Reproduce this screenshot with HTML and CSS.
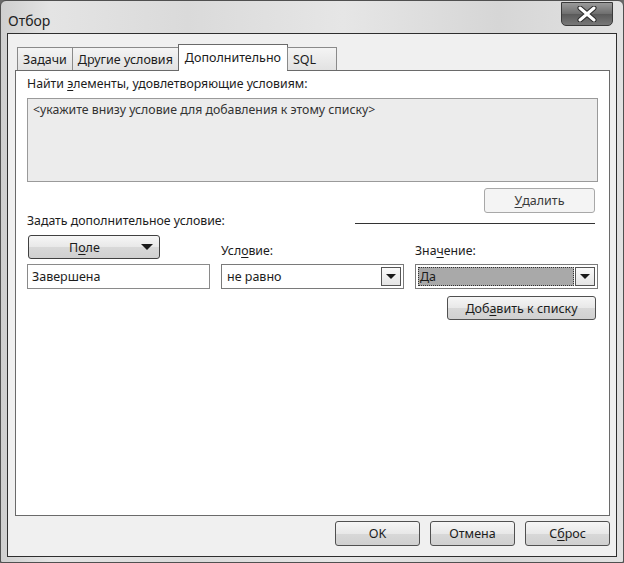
FILE: index.html
```html
<!DOCTYPE html>
<html lang="ru">
<head>
<meta charset="utf-8">
<title>Отбор</title>
<link rel="stylesheet" href="styles.css">
</head>
<body>
<div class="window">
  <div class="titlebar">
    <span class="title">Отбор</span>
    <div class="close">
      <svg width="22" height="16" viewBox="0 0 22 16"><path d="M4 2 L18 14 M18 2 L4 14" stroke="#2a2a2a" stroke-width="5" stroke-linecap="round"/><path d="M4 2 L18 14 M18 2 L4 14" stroke="#fff" stroke-width="3" stroke-linecap="round"/></svg>
    </div>
  </div>
  <div class="client">
    <div class="tabs">
      <div class="tab">Задачи</div>
      <div class="tab">Другие условия</div>
      <div class="tab active">Дополнительно</div>
      <div class="tab tab-sql">SQL</div>
    </div>
    <div class="panel">
      <div class="label">Найти <u>э</u>лементы, удовлетворяющие условиям:</div>
      <div class="listbox">&lt;укажите внизу условие для добавления к этому списку&gt;</div>
      <div class="row-right">
        <div class="btn btn-del"><u>У</u>далить</div>
      </div>
      <div class="section">
        <span class="label">Задать дополнительное условие:</span>
        <span class="rule"></span>
      </div>
      <div class="grid">
        <div class="btn btn-field"><span>П<u>о</u>ле</span><span class="tri"></span></div>
        <div class="label lbl-col">Усл<u>о</u>вие:</div>
        <div class="label lbl-col">Зна<u>ч</u>ение:</div>
        <div class="input">Завершена</div>
        <div class="combo"><span class="val">не равно</span><span class="arrow"><span class="tri"></span></span></div>
        <div class="combo sel"><span class="val"><span class="focus">Да</span></span><span class="arrow"><span class="tri"></span></span></div>
        <div></div>
        <div></div>
        <div class="add-cell"><div class="btn btn-add">Доб<u>а</u>вить к списку</div></div>
      </div>
    </div>
    <div class="footer">
      <div class="btn btn-foot">OK</div>
      <div class="btn btn-foot">Отмена</div>
      <div class="btn btn-foot">С<u>б</u>рос</div>
    </div>
  </div>
</div>
</body>
</html>
```

FILE: styles.css
```css
* { box-sizing: border-box; }
html, body { margin: 0; padding: 0; }
body {
  width: 624px;
  height: 563px;
  background: #6a6a6a;
  font-family: "Noto Sans", "Open Sans", sans-serif;
  font-size: 12px;
  color: #1c1c1c;
  overflow: hidden;
}
.window {
  width: 624px;
  height: 563px;
  border: 1px solid #505050;
  border-radius: 6px 6px 2px 2px;
  background: linear-gradient(90deg, #cfcfcf 0%, #e4e4e4 8%, #dadada 30%, #e6e6e6 55%, #d6d6d6 80%, #e2e2e2 100%);
  display: flex;
  flex-direction: column;
}
.titlebar {
  height: 32px;
  display: flex;
  align-items: flex-start;
  justify-content: space-between;
  padding: 0 10px 0 7px;
}
.title {
  font-size: 14px;
  color: #222;
  margin-top: 10px;
}
.close {
  width: 52px;
  height: 24px;
  margin-top: 1px;
  border: 1px solid #3a3a3a;
  border-radius: 0 0 5px 5px;
  background: linear-gradient(#9a9a9a, #6e6e6e 50%, #5a5a5a 51%, #787878);
  display: flex;
  align-items: center;
  justify-content: center;
}
.client {
  flex: 1;
  margin: 0 6px 5px 6px;
  border: 1px solid #2e2e2e;
  background: #f0f0f0;
  display: flex;
  flex-direction: column;
  padding: 10px 6px 0 7px;
}
.tabs {
  display: flex;
  align-items: flex-end;
  height: 26px;
  padding-left: 2px;
  position: relative;
  z-index: 1;
}
.tab {
  height: 23px;
  border: 1px solid #8a8a8a;
  border-bottom: none;
  margin-right: -1px;
  padding: 3px 5px 0 5px;
  background: linear-gradient(#f4f4f4, #e2e2e2);
  font-size: 12.5px;
  white-space: nowrap;
}
.tab-sql { width: 50px; }
.tab.active {
  height: 27px;
  background: #fff;
  padding: 4px 6px 0 6px;
  margin-bottom: -1px;
  border-color: #6a6a6a;
}
.panel {
  height: 446px;
  background: #fff;
  border: 1px solid #6a6a6a;
  padding: 4px 11px 0 11px;
}
.label {
  font-size: 12.3px;
  line-height: 18px;
  white-space: nowrap;
}
u { text-decoration: underline; text-underline-offset: 2px; }
.listbox {
  margin-top: 5px;
  height: 84px;
  border: 1px solid #9a9a9a;
  background: #ececec;
  padding: 2px 5px;
  font-size: 12.3px;
  color: #333;
}
.row-right {
  display: flex;
  justify-content: flex-end;
  padding-right: 3px;
  margin-top: 6px;
}
.btn {
  height: 25px;
  border: 1px solid #707070;
  border-radius: 3px;
  background: linear-gradient(#f6f6f6, #e8e8e8 50%, #d8d8d8 51%, #d0d0d0);
  display: flex;
  align-items: center;
  justify-content: center;
  font-size: 12.5px;
  white-space: nowrap;
}
.btn-del {
  width: 111px;
  background: #f4f4f4;
  border-color: #a8a8a8;
  color: #3a3a3a;
}
.section {
  display: flex;
  align-items: center;
  margin-top: -1px;
}
.section .rule {
  margin-left: auto;
  margin-right: 3px;
  width: 240px;
  height: 1px;
  background: #333;
  margin-top: 4px;
}
.grid {
  display: grid;
  grid-template-columns: 183px 183px 183px;
  column-gap: 11px;
  margin-top: 5px;
}
.btn-field {
  width: 132px;
  height: 24px;
  margin-left: 1px;
  justify-content: space-between;
  padding: 0 6px 0 40px;
  border-color: #404040;
}
.tri {
  width: 0;
  height: 0;
  border-left: 6px solid transparent;
  border-right: 6px solid transparent;
  border-top: 6px solid #1a1a1a;
}
.lbl-col {
  padding-top: 7px;
}
.input, .combo {
  height: 25px;
  margin-top: 4px;
  border: 1px solid #8a8a8a;
  background: #fff;
  font-size: 12.5px;
  display: flex;
  align-items: center;
}
.input { padding-left: 4px; }
.combo { padding: 2px; border-color: #7a7a7a; }
.combo .val {
  flex: 1;
  padding-left: 3px;
  height: 100%;
  display: flex;
  align-items: center;
}
.combo .arrow {
  width: 20px;
  height: 100%;
  border: 1px solid #555;
  background: linear-gradient(#fafafa, #e4e4e4);
  display: flex;
  align-items: center;
  justify-content: center;
}
.combo .arrow .tri {
  border-left-width: 5px;
  border-right-width: 5px;
  border-top-width: 5px;
}
.combo.sel .val {
  background: #a9a9a9;
  padding-left: 0;
  outline: 1px dotted #333;
  outline-offset: -1px;
  margin-right: 1px;
}
.combo.sel .focus { padding-left: 2px; }
.add-cell {
  display: flex;
  justify-content: flex-end;
  margin-top: 7px;
  padding-right: 2px;
}
.btn-add {
  width: 149px;
  height: 24px;
  border-color: #505050;
}
.footer {
  display: flex;
  justify-content: flex-end;
  gap: 10px;
  padding: 5px 0 0 0;
}
.btn-foot {
  width: 85px;
  height: 25px;
  border-color: #505050;
}
```
